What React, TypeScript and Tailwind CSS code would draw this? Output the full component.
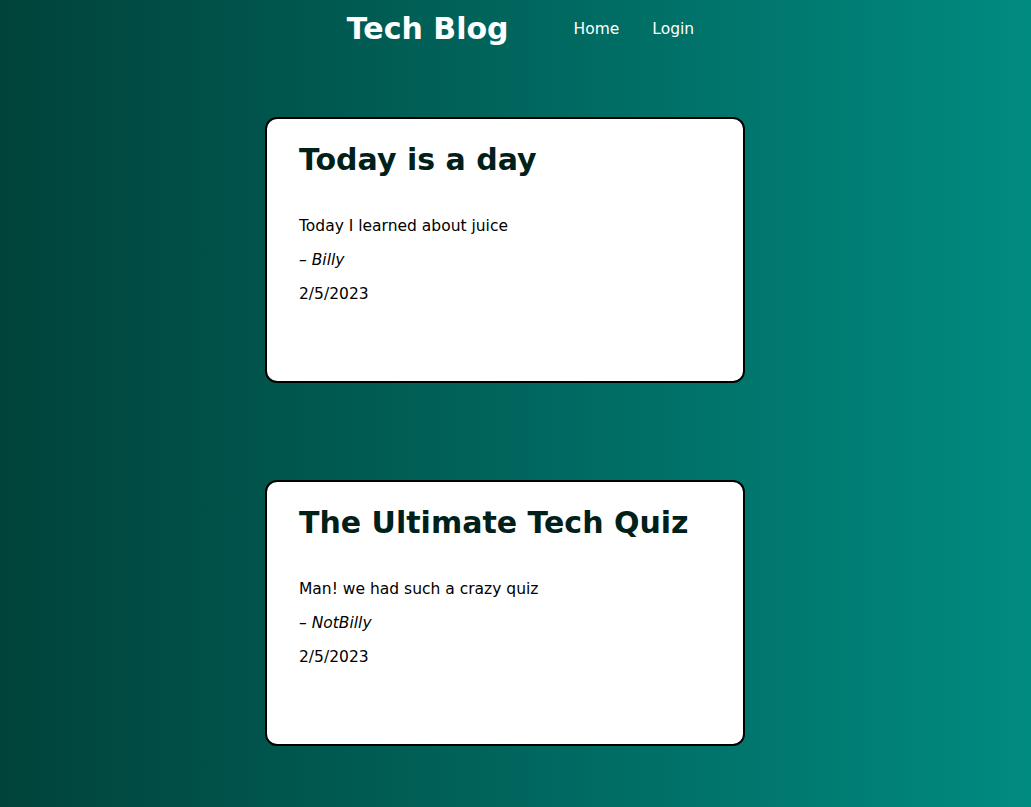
const posts = [
  { title: "Today is a day", body: "Today I learned about juice", author: "Billy", date: "2/5/2023" },
  { title: "The Ultimate Tech Quiz", body: "Man! we had such a crazy quiz", author: "NotBilly", date: "2/5/2023" },
];

export default function App() {
  return (
    <div
      className="min-h-[807px] bg-gradient-to-r from-[#00433b] to-[#008b81]"
      style={{ fontFamily: '"DejaVu Sans", sans-serif' }}
    >
      <header className="flex h-[56px] items-center justify-center gap-[65px] pl-[10px]">
        <h1 className="text-[30px] font-bold text-white">Tech Blog</h1>
        <nav className="mt-[3px] flex gap-[33px] text-[15.5px] text-white">
          <a>Home</a>
          <a>Login</a>
        </nav>
      </header>
      <main className="flex flex-col items-center gap-[97px] pt-[61px] pb-[60px] pr-[21px]">
        {posts.map((p) => (
          <article
            key={p.title}
            className="h-[266px] w-[480px] rounded-[12px] border-2 border-black bg-white px-[32px] pt-[22px]"
          >
            <h2 className="whitespace-nowrap text-[30px] font-bold leading-[38px] text-[#00201a]">{p.title}</h2>
            <p className="mt-[38px] text-[15.5px] leading-[18px] text-black">{p.body}</p>
            <p className="mt-[16px] text-[15.5px] leading-[18px] italic text-black">– {p.author}</p>
            <p className="mt-[16px] text-[15.5px] leading-[18px] text-black">{p.date}</p>
          </article>
        ))}
      </main>
    </div>
  );
}
